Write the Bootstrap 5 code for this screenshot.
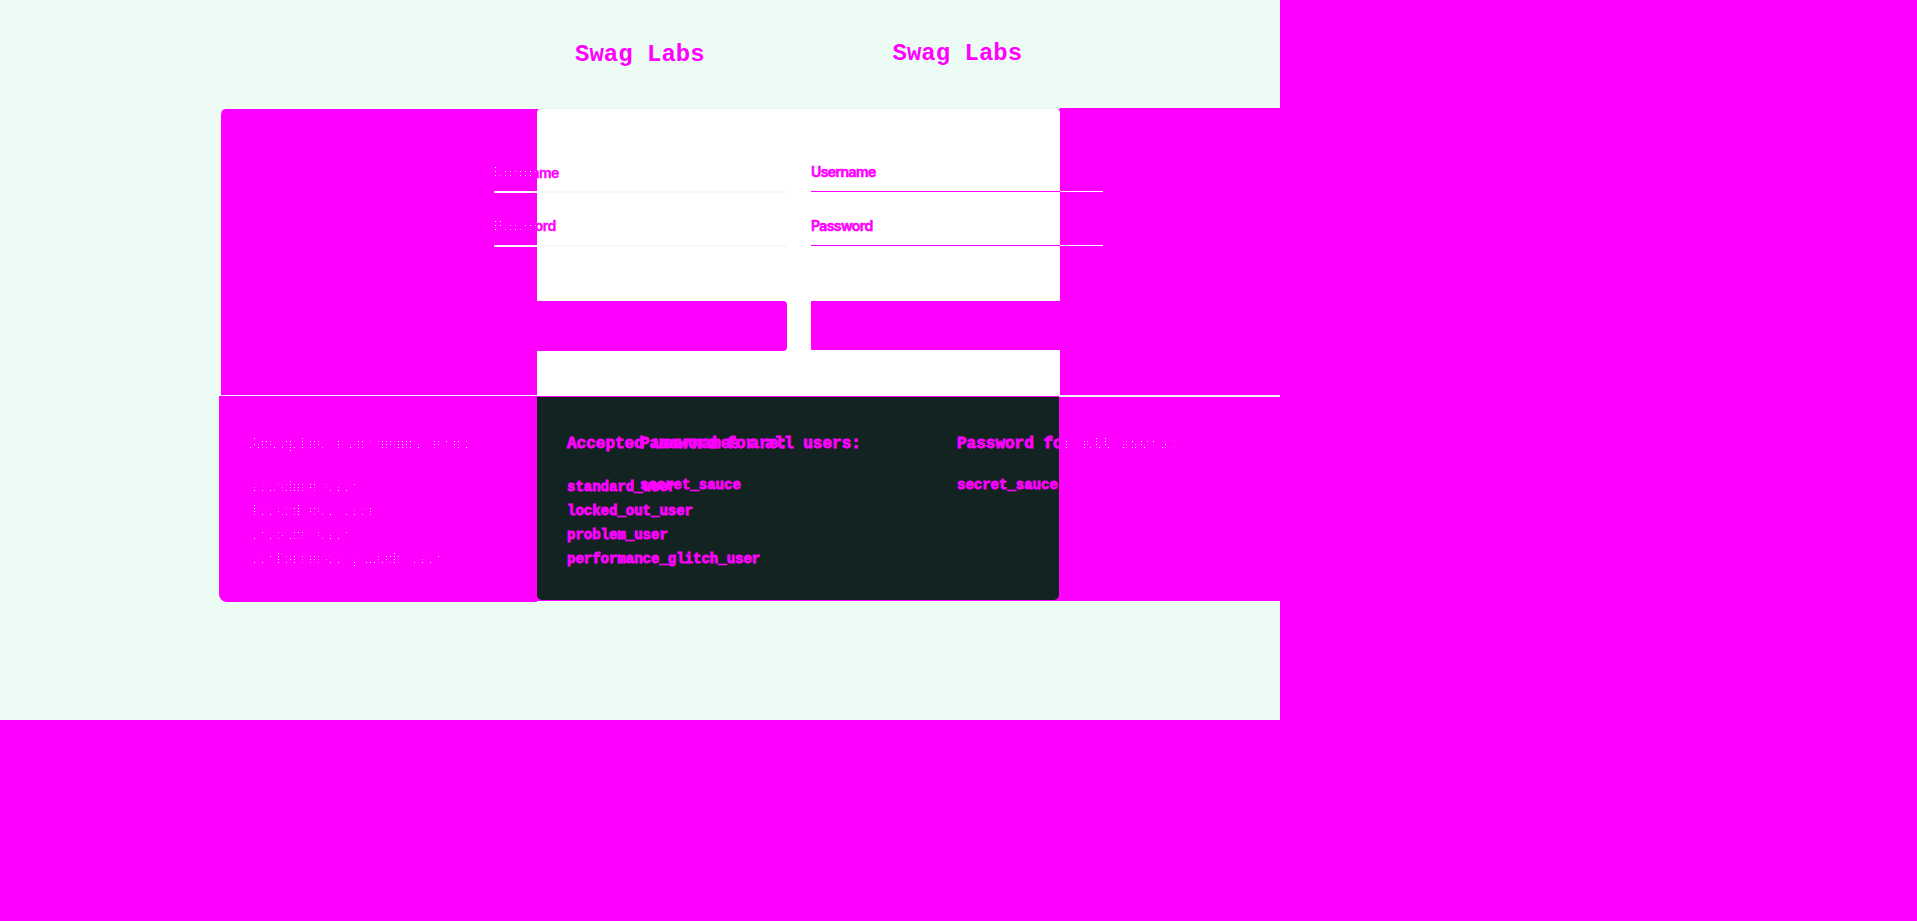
<!DOCTYPE html>
<html lang="en">
<head>
<meta charset="utf-8">
<title>Swag Labs</title>
<link href="https://cdn.jsdelivr.net/npm/bootstrap@5.3.0/dist/css/bootstrap.min.css" rel="stylesheet">
<style>
:root { --hot: #ff00ff; --mint: #ecfcf5; --ink: #132322; }
body { background: var(--hot); color: var(--hot); }
.stage { width: 1280px; height: 720px; background: var(--mint); }
.top-bar { height: 108px; padding-left: 575px; gap: 187.5px; }
.brand-name { font: 700 24px/32px "Liberation Mono", monospace; width: 130px; padding-top: 39px; white-space: pre; }
.brand-name.raised { padding-top: 38px; }
.sheet { margin-left: 219px; }
.hot { background: var(--hot); }
.upper { height: 288px; }
.up-left { width: 318px; border-left: 2px solid #f3f7f5; margin-top: 1px; border-bottom: 1px solid #f3eef3; border-top-left-radius: 6px; }
.up-mid { width: 523px; background: linear-gradient(var(--mint) 1px, var(--hot) 1px); border-bottom: 1px solid #eef6f2; }
.up-mid .paper { height: 287px; background: #fff; border-top: 1px solid #f0eeee; border-radius: 5px 5px 0 0; }
.up-right { border-bottom: 1px solid #eef5f2; }
.lower { height: 205px; }
.low-left { width: 318px; height: 206px; border-bottom-left-radius: 8px; }
.low-mid { width: 522px; padding: 1px 0; }
.low-mid .slate { height: 203px; background: var(--ink); border-radius: 0 0 5px 5px; }
.low-right { border-top: 1px solid #eef5f2; }
.form-layer { padding: 54px 0 0 275px; gap: 24px; }
.login-faded { width: 293px; }
.login-solid { width: 292px; }
.field { height: 54px; }
.label-text { height: 20px; font: 600 14px/20px Inter, "Liberation Sans", sans-serif; letter-spacing: -.6px; white-space: pre; -webkit-text-stroke: .6px; }
.low-label { padding-top: 1px; }
.rule { margin-top: 9px; }
.rule-a { height: 2px; background: linear-gradient(90deg, #fbf6fb 43px, #f7f7f7 43px); }
.rule-b { height: 1px; background: linear-gradient(90deg, var(--hot) 249px, #fff 249px); }
.submit { height: 50px; margin-top: 31px; border-radius: 4px; }
.login-solid .submit { height: 49px; border-radius: 1px; }
.speck { color: transparent; background: linear-gradient(90deg, transparent var(--cut, 100%), var(--hot) var(--cut, 100%)), conic-gradient(from 0deg at 1px 1px, transparent 75%, #fff 75%) 0 0 / 4px 3px; -webkit-background-clip: text; background-clip: text; }
.label-text.speck { background: linear-gradient(90deg, transparent 43px, var(--hot) 43px), conic-gradient(from 0deg at 1px 1px, transparent 75%, #fff 75%) 1px 1px / 5px 4px; -webkit-background-clip: text; background-clip: text; -webkit-text-stroke: .4px transparent; }
.speck-after { color: transparent; background: conic-gradient(from 0deg at 1px 1px, transparent 75%, #fff 75%) 0 0 / 3px 3px; -webkit-background-clip: text; background-clip: text; }
.mono { font-family: "Liberation Mono", monospace; font-weight: 700; white-space: pre; -webkit-text-stroke: .9px; }
.mono h4 { font: inherit; font-size: 16px; line-height: 24px; margin: 0 0 19px; }
.mono div { font-size: 14px; line-height: 24px; }
.cred { position: absolute; top: 36px; }
.cred-a { left: 31px; }
.cred-b { left: 348px; }
.cred-c { left: 421px; }
.cred-c h4, .cred-d h4 { margin-bottom: 17px; }
.cred-d { left: 738px; }
.mono .speck, .mono .speck-after { -webkit-text-stroke: 0; font-weight: 400; width: fit-content; }
.mono h4.speck, .mono .speck-after { font-weight: 700; }
</style>
<script src="https://cdn.jsdelivr.net/npm/bootstrap@5.3.0/dist/js/bootstrap.bundle.min.js"></script>
</head>
<body class="m-0 overflow-hidden">
<main class="stage d-flex flex-column">
  <header class="top-bar d-flex">
    <span class="brand-name">Swag Labs</span>
    <span class="brand-name raised">Swag Labs</span>
  </header>
  <section class="sheet upper d-flex position-relative">
    <div class="up-left hot"></div>
    <div class="up-mid"><div class="paper"></div></div>
    <div class="up-right hot flex-grow-1"></div>
    <div class="form-layer position-absolute top-0 start-0 d-flex">
      <div class="login-faded">
        <div class="field"><div class="label-text low-label speck">Username</div><div class="rule rule-a"></div></div>
        <div class="field"><div class="label-text speck">Password</div><div class="rule rule-a"></div></div>
        <div class="submit hot"></div>
      </div>
      <div class="login-solid">
        <div class="field"><div class="label-text">Username</div><div class="rule rule-b"></div></div>
        <div class="field"><div class="label-text">Password</div><div class="rule rule-b"></div></div>
        <div class="submit hot"></div>
      </div>
    </div>
  </section>
  <section class="sheet lower d-flex position-relative">
    <div class="low-left hot"></div>
    <div class="low-mid hot"><div class="slate"></div></div>
    <div class="low-right hot flex-grow-1"></div>
    <div class="cred cred-a mono"><h4 class="speck">Accepted usernames are:</h4><div class="speck">standard_user</div><div class="speck">locked_out_user</div><div class="speck">problem_user</div><div class="speck">performance_glitch_user</div></div>
    <div class="cred cred-b mono"><h4>Accepted usernames are:</h4><div>standard_user</div><div>locked_out_user</div><div>problem_user</div><div>performance_glitch_user</div></div>
    <div class="cred cred-c mono"><h4>Password for all users:</h4><div>secret_sauce</div></div>
    <div class="cred cred-d mono"><h4>Password fo<span class="speck-after">r all users:</span></h4><div>secret_sauce</div></div>
  </section>
</main>
</body>
</html>
